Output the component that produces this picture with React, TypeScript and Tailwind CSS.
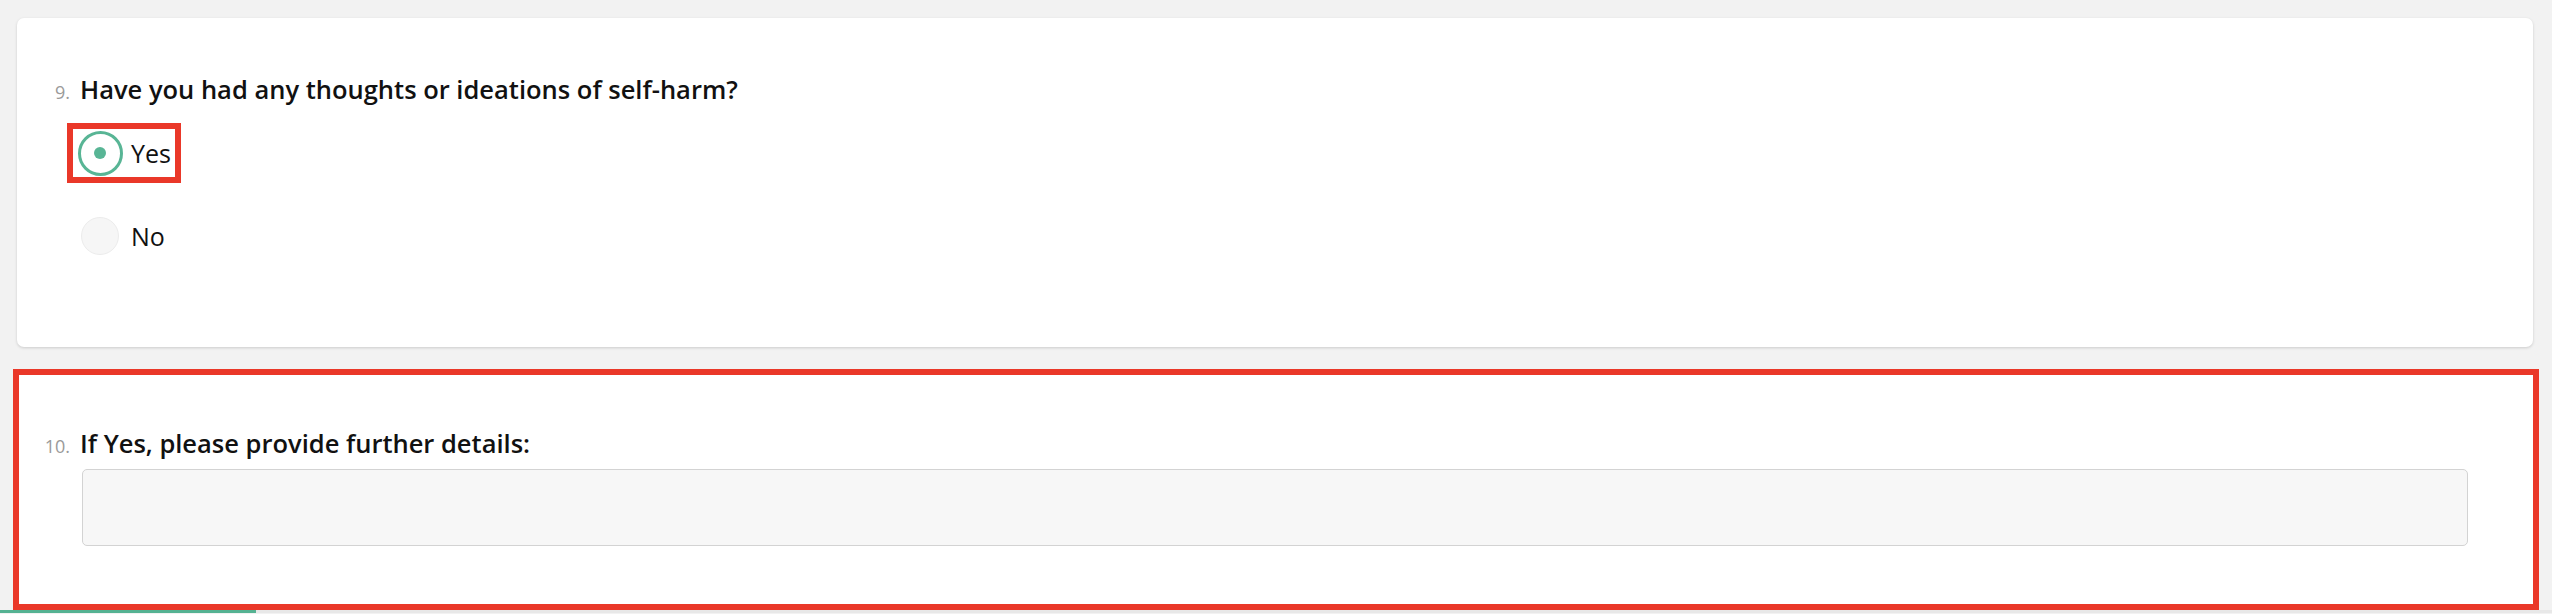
import React, { useState } from "react";

interface RadioOptionProps {
  label: string;
  checked: boolean;
  highlighted?: boolean;
  onSelect: () => void;
}

const RadioOption: React.FC<RadioOptionProps> = ({ label, checked, highlighted, onSelect }) => {
  return (
    <button
      type="button"
      onClick={onSelect}
      className={`flex h-[60px] items-center border-[6px] pr-[4px] ${highlighted ? "border-[#ea3829]" : "border-transparent"}`}
    >
      <span className="flex w-[54px] items-center justify-center">
        {checked ? (
          <span className="flex h-[45px] w-[45px] items-center justify-center rounded-full border-[3px] border-[#58b595] bg-white">
            <span className="h-[12px] w-[12px] rounded-full bg-[#58b595]" />
          </span>
        ) : (
          <span className="h-[38px] w-[38px] rounded-full border border-[#ececec] bg-[#f6f6f6]" />
        )}
      </span>
      <span className="ml-[4px] text-[25px] leading-[32px] text-[#111]">{label}</span>
    </button>
  );
};

const QuestionTitle: React.FC<{ num: string; text: string }> = ({ num, text }) => (
  <div className="flex items-baseline">
    <span className="w-[40px] text-right text-[18px] text-[#9a9a9a]">{num}</span>
    <span className="ml-[10px] text-[25.5px] leading-[32px] font-semibold text-[#111]">{text}</span>
  </div>
);

export default function App() {
  const [answer, setAnswer] = useState<string>("yes");
  const [details, setDetails] = useState<string>("");

  return (
    <div
      className="flex h-[614px] w-[2552px] flex-col overflow-hidden bg-[#f2f2f2] pt-[18px]"
      style={{ fontFamily: '"Open Sans", "Liberation Sans", sans-serif' }}
    >
      {/* Question 9 */}
      <div className="ml-[17px] h-[329px] w-[2516px] rounded-[7px] bg-white pt-[55px] pl-[13px] shadow-[0_1px_3px_rgba(0,0,0,0.16)]">
        <QuestionTitle num="9." text="Have you had any thoughts or ideations of self-harm?" />
        <div className="mt-[17px] flex flex-col items-start gap-[23px] pl-[37px]">
          <RadioOption label="Yes" checked={answer === "yes"} highlighted onSelect={() => setAnswer("yes")} />
          <RadioOption label="No" checked={answer === "no"} onSelect={() => setAnswer("no")} />
        </div>
      </div>

      {/* Question 10 */}
      <div className="mt-[22px] ml-[13px] h-[241px] w-[2526px] border-[6px] border-[#ea3829] bg-white pt-[52px] pl-[11px]">
        <QuestionTitle num="10." text="If Yes, please provide further details:" />
        <textarea
          value={details}
          onChange={(e) => setDetails(e.target.value)}
          className="mt-[9px] ml-[52px] block h-[77px] w-[2386px] resize-none rounded-[5px] border border-[#d3d3d3] bg-[#f7f7f7] outline-none"
        />
      </div>

      {/* progress */}
      <div className="flex h-[3px]">
        <div className="w-[256px] bg-[#55b292]" />
        <div className="flex-1 bg-[#e8e8e8]" />
      </div>
    </div>
  );
}
